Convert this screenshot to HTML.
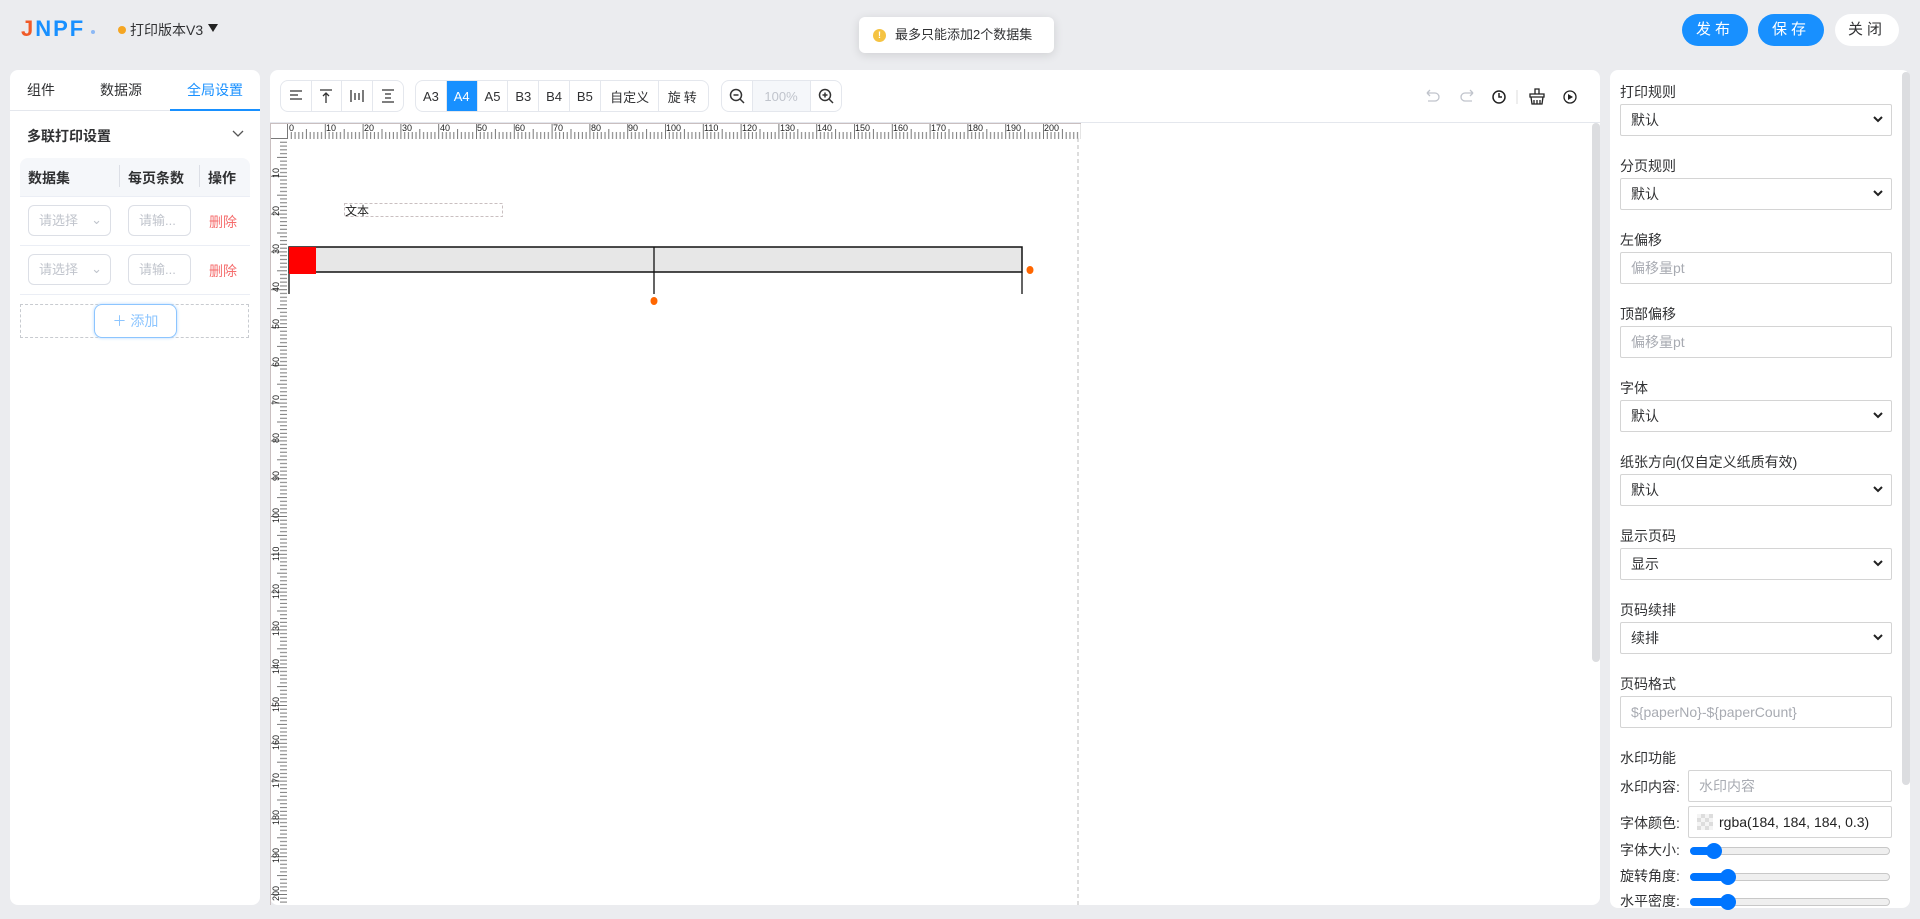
<!DOCTYPE html>
<html><head><meta charset="utf-8">
<style>
*{box-sizing:border-box;margin:0;padding:0}
body{width:1920px;height:919px;background:#ebecef;font-family:"Liberation Sans","Noto Sans CJK SC",sans-serif;font-size:14px;color:#303133;position:relative;overflow:hidden}
.abs{position:absolute}
.panel{position:absolute;background:#fff;border-radius:8px}
.btn{position:absolute;top:14px;height:32px;border-radius:16px;font-size:15px;text-align:center;line-height:32px;letter-spacing:4px}
.tab{position:absolute;top:80px;font-size:14px}
.sel{position:absolute;border:1px solid #dcdfe6;border-radius:6px;color:#c0c4cc;font-size:13px;line-height:29px;padding-left:10px}
.grp{position:absolute;top:80px;height:32px;border:1px solid #e4e7ed;border-radius:8px;display:flex;overflow:hidden;background:#fff}
.grp div{border-right:1px solid #e4e7ed;height:100%;display:flex;align-items:center;justify-content:center;font-size:13px}
.grp div:last-child{border-right:none}
.lab{position:absolute;left:1620px;font-size:14px;color:#303133}
.fs{position:absolute;left:1620px;width:272px;height:32px;border:1px solid #d4d4d4;border-radius:2px;font-size:14px;line-height:30px;padding-left:10px}
.fs .ar{position:absolute;right:8px;top:11px}
.slider{position:absolute;left:1690px;width:200px;height:8px;border-radius:4px;background:#efefef;border:1px solid #c8c8c8}
.slider .f{position:absolute;left:-1px;top:-1px;height:8px;border-radius:4px;background:#0075ff}
.slider .k{position:absolute;top:-5px;width:16px;height:16px;border-radius:50%;background:#0075ff}
</style></head><body>

<div class="abs" style="left:21px;top:17px;font-size:22px;font-weight:bold;letter-spacing:2px;font-family:'Liberation Sans',sans-serif;line-height:24px"><span style="color:#f05a28">J</span><span style="color:#1890ff">NPF</span></div>
<div class="abs" style="left:91px;top:30px;width:4px;height:4px;border-radius:50%;background:#8cb8f5"></div>
<div class="abs" style="left:118px;top:26px;width:8px;height:8px;border-radius:50%;background:#f5a623"></div>
<div class="abs" style="left:130px;top:20px;font-size:14px;color:#303133">打印版本V3</div>
<div class="abs" style="left:208px;top:24px;width:0;height:0;border-left:5px solid transparent;border-right:5px solid transparent;border-top:8px solid #222"></div>

<div class="abs" style="left:859px;top:17px;width:195px;height:36px;background:#fff;border-radius:6px;box-shadow:0 2px 10px rgba(0,0,0,.12);font-size:13px;line-height:36px;padding-left:36px">最多只能添加2个数据集</div>
<div class="abs" style="left:873px;top:29px;width:13px;height:13px;border-radius:50%;background:#f5c342;color:#fff;font-size:9px;line-height:13px;text-align:center;font-weight:bold">!</div>

<div class="btn" style="left:1682px;width:66px;background:#1890ff;color:#fff">发布</div>
<div class="btn" style="left:1758px;width:66px;background:#1890ff;color:#fff">保存</div>
<div class="btn" style="left:1835px;width:64px;background:#fff;color:#303133">关闭</div>

<div class="panel" style="left:10px;top:70px;width:250px;height:835px"></div>
<div class="abs" style="left:10px;top:110px;width:250px;height:1px;background:#e4e7ed"></div>
<div class="abs" style="left:170px;top:109px;width:90px;height:2px;background:#1890ff"></div>
<div class="tab" style="left:27px">组件</div>
<div class="tab" style="left:100px">数据源</div>
<div class="tab" style="left:187px;color:#1890ff">全局设置</div>
<div class="abs" style="left:27px;top:126px;font-weight:bold;font-size:14px">多联打印设置</div>
<svg class="abs" style="left:232px;top:130px" width="12" height="8"><path d="M1 1l5 5 5-5" fill="none" stroke="#555" stroke-width="1.3"/></svg>
<div class="abs" style="left:20px;top:158px;width:230px;height:39px;background:#f5f7fa;border-radius:8px 8px 0 0;border-bottom:1px solid #ebeef5"></div>
<div class="abs" style="left:28px;top:168px;font-weight:bold;font-size:14px">数据集</div>
<div class="abs" style="left:128px;top:168px;font-weight:bold;font-size:14px">每页条数</div>
<div class="abs" style="left:208px;top:168px;font-weight:bold;font-size:14px">操作</div>
<div class="abs" style="left:119px;top:165px;width:1px;height:22px;background:#dcdfe6"></div>
<div class="abs" style="left:199px;top:165px;width:1px;height:22px;background:#dcdfe6"></div>
<div class="abs" style="left:20px;top:245px;width:230px;height:1px;background:#ebeef5"></div>
<div class="abs" style="left:20px;top:294px;width:230px;height:1px;background:#ebeef5"></div>
<div class="sel" style="left:28px;top:205px;width:83px;height:31px">请选择 <span style="position:absolute;right:8px;top:-1px">⌄</span></div>
<div class="sel" style="left:128px;top:205px;width:63px;height:31px">请输...</div>
<div class="abs" style="left:209px;top:212px;color:#f56c6c;font-size:14px">删除</div>
<div class="sel" style="left:28px;top:254px;width:83px;height:31px">请选择 <span style="position:absolute;right:8px;top:-1px">⌄</span></div>
<div class="sel" style="left:128px;top:254px;width:63px;height:31px">请输...</div>
<div class="abs" style="left:209px;top:261px;color:#f56c6c;font-size:14px">删除</div>
<div class="abs" style="left:20px;top:304px;width:229px;height:34px;border:1px dashed #c8cbd0"></div>
<div class="abs" style="left:94px;top:304px;width:83px;height:34px;border:1px solid #8cc5ff;border-radius:8px;color:#8cc5ff;text-align:center;line-height:32px;font-size:14px;box-shadow:0 0 3px #b3d8ff">＋ 添加</div>

<div class="panel" style="left:270px;top:70px;width:1330px;height:835px"></div>
<div class="abs" style="left:270px;top:122px;width:1330px;height:1px;background:#e4e7ed"></div>
<div class="grp" style="left:280px;width:124px">
 <div style="width:31px"><svg width="14" height="12"><path d="M1 1h12M1 5h8M1 9h12" stroke="#333" stroke-width="1.3"/></svg></div>
 <div style="width:31px"><svg width="14" height="14"><path d="M1 1h12M7 4v10M4 7l3-3 3 3" stroke="#333" stroke-width="1.3" fill="none"/></svg></div>
 <div style="width:31px"><svg width="14" height="14"><path d="M1 1v12M13 1v12M5 4v7M9 4v7" stroke="#333" stroke-width="1.3"/></svg></div>
 <div style="width:31px"><svg width="14" height="14"><path d="M1 1h12M1 13h12M4 5h6M4 9h6" stroke="#333" stroke-width="1.3"/></svg></div>
</div>
<div class="grp" style="left:415px;width:294px">
 <div style="width:31px">A3</div><div style="width:31px;background:#1890ff;color:#fff">A4</div><div style="width:31px">A5</div><div style="width:31px">B3</div><div style="width:31px">B4</div><div style="width:31px">B5</div><div style="width:59px">自定义</div><div style="width:49px;letter-spacing:3px">旋转</div>
</div>
<div class="grp" style="left:721px;width:121px">
 <div style="width:31px"><svg width="16" height="16"><circle cx="7" cy="7" r="5.5" fill="none" stroke="#333" stroke-width="1.5"/><path d="M4.5 7h5M11 11l4 4" stroke="#333" stroke-width="1.5"/></svg></div>
 <div style="width:59px;background:#f5f7fa;color:#c0c4cc">100%</div>
 <div style="width:31px"><svg width="16" height="16"><circle cx="7" cy="7" r="5.5" fill="none" stroke="#333" stroke-width="1.5"/><path d="M4.5 7h5M7 4.5v5M11 11l4 4" stroke="#333" stroke-width="1.5"/></svg></div>
</div>
<svg class="abs" style="left:1422px;top:88px" width="170" height="18">
 <path d="M5 5h8a4 4 0 0 1 0 8H6M5 5l3-3M5 5l3 3" fill="none" stroke="#c0c4cc" stroke-width="1.3"/>
 <path d="M51 5h-8a4 4 0 0 0 0 8h7M51 5l-3-3M51 5l-3 3" fill="none" stroke="#c0c4cc" stroke-width="1.3"/>
 <circle cx="77" cy="9" r="6" fill="none" stroke="#222" stroke-width="1.5"/><path d="M77 5v4h3" fill="none" stroke="#222" stroke-width="1.5"/>
 <path d="M95 2v14" stroke="#ddd"/>
 <path d="M113 1h4v5h-4zM108 6h14v3H108zM109 9l1 7h10l1-7M112 12v4M115 12v4M118 12v4" fill="none" stroke="#222" stroke-width="1.3"/>
 <circle cx="148" cy="9" r="6" fill="none" stroke="#222" stroke-width="1.3"/><path d="M146 6v6l5-3z" fill="#222"/>
</svg>

<svg class="abs" style="left:270px;top:123px" width="1330" height="782">
 <defs>
  <pattern id="hp" x="17" y="0" width="37.8" height="16" patternUnits="userSpaceOnUse">
   <path d="M0.5 0v16M4.28 9v7M8.06 9v7M11.84 9v7M15.62 9v7M19.4 6v10M23.18 9v7M26.96 9v7M30.74 9v7M34.52 9v7" stroke="#777" stroke-width="1"/>
  </pattern>
  <pattern id="vp" x="0" y="15" width="17" height="37.8" patternUnits="userSpaceOnUse">
   <path d="M0 0.5h17M10 4.28h7M10 8.06h7M10 11.84h7M10 15.62h7M7 19.4h10M10 23.18h7M10 26.96h7M10 30.74h7M10 34.52h7" stroke="#777" stroke-width="1"/>
  </pattern>
 </defs>
 <rect x="0" y="0" width="1330" height="16" fill="#fff"/>
 <rect x="17" y="0" width="794" height="16" fill="url(#hp)"/>
 <rect x="0" y="15" width="17" height="770" fill="url(#vp)"/>
 <path d="M0 0.5h811" stroke="#c9bfc0"/>
 <path d="M0.5 0v782" stroke="#c9bfc0"/>
 <path d="M808 15v770" stroke="#bbb" stroke-dasharray="4 3"/>
 <g font-size="9" fill="#222" font-family="Liberation Sans,sans-serif">
  <text x="19" y="8">0</text><text x="56" y="8">10</text><text x="94" y="8">20</text><text x="132" y="8">30</text><text x="170" y="8">40</text><text x="207" y="8">50</text><text x="245" y="8">60</text><text x="283" y="8">70</text><text x="321" y="8">80</text><text x="358" y="8">90</text><text x="396" y="8">100</text><text x="434" y="8">110</text><text x="472" y="8">120</text><text x="510" y="8">130</text><text x="547" y="8">140</text><text x="585" y="8">150</text><text x="623" y="8">160</text><text x="661" y="8">170</text><text x="698" y="8">180</text><text x="736" y="8">190</text><text x="774" y="8">200</text>
 </g>
 <g font-size="9" fill="#222" font-family="Liberation Sans,sans-serif">
  <text transform="translate(9,55) rotate(-90)">10</text><text transform="translate(9,93) rotate(-90)">20</text><text transform="translate(9,131) rotate(-90)">30</text><text transform="translate(9,169) rotate(-90)">40</text><text transform="translate(9,206) rotate(-90)">50</text><text transform="translate(9,244) rotate(-90)">60</text><text transform="translate(9,282) rotate(-90)">70</text><text transform="translate(9,320) rotate(-90)">80</text><text transform="translate(9,358) rotate(-90)">90</text><text transform="translate(9,400) rotate(-90)">100</text><text transform="translate(9,438) rotate(-90)">110</text><text transform="translate(9,476) rotate(-90)">120</text><text transform="translate(9,513) rotate(-90)">130</text><text transform="translate(9,551) rotate(-90)">140</text><text transform="translate(9,589) rotate(-90)">150</text><text transform="translate(9,627) rotate(-90)">160</text><text transform="translate(9,665) rotate(-90)">170</text><text transform="translate(9,702) rotate(-90)">180</text><text transform="translate(9,740) rotate(-90)">190</text><text transform="translate(9,778) rotate(-90)">200</text>
 </g>
 <rect x="74.5" y="80.5" width="158" height="13" fill="none" stroke="#c9bfc0" stroke-dasharray="3 2"/>
 <text x="75" y="92" font-size="12" fill="#222" font-family="Noto Sans CJK SC,sans-serif">文本</text>
 <rect x="19" y="124" width="733" height="25" fill="#e7e7e7" stroke="#111" stroke-width="1.5"/>
 <path d="M384 124v47M19 149v22M752 149v22" stroke="#111" stroke-width="1.3"/>
 <rect x="19" y="124" width="27" height="27" fill="#f00"/>
 <ellipse cx="760" cy="147" rx="3.5" ry="4" fill="#f60"/>
 <ellipse cx="384" cy="178" rx="3.5" ry="4" fill="#f60"/>
</svg>
<div class="abs" style="left:1592px;top:123px;width:8px;height:539px;background:#dcdde0;border-radius:4px"></div>

<div class="panel" style="left:1610px;top:70px;width:300px;height:838px"></div>
<div class="abs" style="left:1902px;top:72px;width:8px;height:713px;background:#dcdde0;border-radius:4px"></div>

<div class="lab" style="top:82px">打印规则</div>
<div class="fs" style="top:104px">默认<svg class="ar" width="10" height="8"><path d="M1 1l4 4 4-4" fill="none" stroke="#222" stroke-width="2"/></svg></div>
<div class="lab" style="top:156px">分页规则</div>
<div class="fs" style="top:178px">默认<svg class="ar" width="10" height="8"><path d="M1 1l4 4 4-4" fill="none" stroke="#222" stroke-width="2"/></svg></div>
<div class="lab" style="top:230px">左偏移</div>
<div class="fs" style="top:252px;color:#a8abb2">偏移量pt</div>
<div class="lab" style="top:304px">顶部偏移</div>
<div class="fs" style="top:326px;color:#a8abb2">偏移量pt</div>
<div class="lab" style="top:378px">字体</div>
<div class="fs" style="top:400px">默认<svg class="ar" width="10" height="8"><path d="M1 1l4 4 4-4" fill="none" stroke="#222" stroke-width="2"/></svg></div>
<div class="lab" style="top:452px">纸张方向(仅自定义纸质有效)</div>
<div class="fs" style="top:474px">默认<svg class="ar" width="10" height="8"><path d="M1 1l4 4 4-4" fill="none" stroke="#222" stroke-width="2"/></svg></div>
<div class="lab" style="top:526px">显示页码</div>
<div class="fs" style="top:548px">显示<svg class="ar" width="10" height="8"><path d="M1 1l4 4 4-4" fill="none" stroke="#222" stroke-width="2"/></svg></div>
<div class="lab" style="top:600px">页码续排</div>
<div class="fs" style="top:622px">续排<svg class="ar" width="10" height="8"><path d="M1 1l4 4 4-4" fill="none" stroke="#222" stroke-width="2"/></svg></div>
<div class="lab" style="top:674px">页码格式</div>
<div class="fs" style="top:696px;color:#a8abb2">${paperNo}-${paperCount}</div>
<div class="lab" style="top:748px">水印功能</div>
<div class="lab" style="top:777px">水印内容:</div>
<div class="fs" style="top:770px;left:1688px;width:204px;color:#a8abb2">水印内容</div>
<div class="lab" style="top:813px">字体颜色:</div>
<div class="fs" style="top:806px;left:1688px;width:204px;padding-left:30px;color:#222">rgba(184, 184, 184, 0.3)</div>
<div class="abs" style="left:1697px;top:814px;width:16px;height:16px;background:repeating-conic-gradient(#ddd 0 25%,#f4f4f4 0 50%) 0 0/8px 8px"></div>
<div class="lab" style="top:840px">字体大小:</div>
<div class="slider" style="top:847px"><div class="f" style="width:24px"></div><div class="k" style="left:15px"></div></div>
<div class="lab" style="top:866px">旋转角度:</div>
<div class="slider" style="top:873px"><div class="f" style="width:38px"></div><div class="k" style="left:29px"></div></div>
<div class="lab" style="top:891px">水平密度:</div>
<div class="slider" style="top:898px"><div class="f" style="width:38px"></div><div class="k" style="left:29px"></div></div>

</body></html>
